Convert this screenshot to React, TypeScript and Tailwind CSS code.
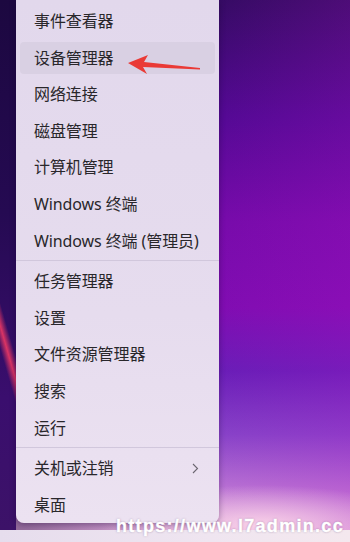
import React from 'react';

type Item = { label: string; active?: boolean; submenu?: boolean };

const groups: Item[][] = [
    [
        { label: '事件查看器' },
        { label: '设备管理器', active: true },
        { label: '网络连接' },
        { label: '磁盘管理' },
        { label: '计算机管理' },
        { label: 'Windows 终端' },
        { label: 'Windows 终端 (管理员)' },
    ],
    [
        { label: '任务管理器' },
        { label: '设置' },
        { label: '文件资源管理器' },
        { label: '搜索' },
        { label: '运行' },
    ],
    [
        { label: '关机或注销', submenu: true },
        { label: '桌面' },
    ],
];

const MenuRow: React.FC<{ item: Item }> = ({ item }) => (
    <div className="h-[36.6px] px-[4px] py-[2.3px]">
        <div
            className={`h-full rounded-[4px] pl-[14px] pr-[16px] flex items-center justify-between ${item.active ? 'bg-[#d9d0e3]' : ''}`}
        >
            <span className="text-[16px] leading-none whitespace-nowrap tracking-[-0.1px] text-[#29272b]">{item.label}</span>
            {item.submenu && (
                <svg width="8" height="11" viewBox="0 0 8 11" fill="none">
                    <path d="M2 1l4.5 4.5L2 10" stroke="#6b6670" strokeWidth="1.1" />
                </svg>
            )}
        </div>
    </div>
);

const App: React.FC = () => {
    return (
        <div className="relative w-[350px] h-[542px] overflow-hidden flex flex-col font-['Noto_Sans','Noto_Sans_CJK_SC',sans-serif]">
            <div className="flex-1 flex pl-[16px] [background:linear-gradient(74deg,rgba(236,52,96,0)_31%,rgba(236,56,100,0.9)_35%,rgba(236,52,96,0)_39%)_0_0/16px_100%_no-repeat,linear-gradient(180deg,#1c0840_0%,#250a52_40%,#3a0e6e_75%,#3c1268_100%)_0_0/16px_100%_no-repeat,radial-gradient(ellipse_160px_40px_at_260px_525px,rgba(255,220,235,0.85),rgba(255,220,235,0)),linear-gradient(90deg,rgba(16,0,40,0.4)_0%,rgba(16,0,40,0)_45%,rgba(180,20,200,0.25)_100%),linear-gradient(180deg,#2b0a5c_0%,#4c0890_22%,#720aa8_42%,#7c0cb0_58%,#641eb6_70%,#8446c8_82%,#b878d4_92%,#dca6da_100%)]">
                <div className="w-[203px] h-[523px] rounded-b-[8px] bg-[linear-gradient(180deg,#e2d8ec_0%,#e6dcee_60%,#ece2f1_100%)] shadow-[0_2px_6px_rgba(20,0,40,0.35)] pt-[2.7px]">
                    {groups.map((group, gi) => (
                        <div key={gi}>
                            {gi > 0 && (
                                <div className="h-[4px] flex items-center">
                                    <div className="h-px w-full bg-[#d1c7dc]" />
                                </div>
                            )}
                            {group.map((item) => (
                                <MenuRow key={item.label} item={item} />
                            ))}
                        </div>
                    ))}
                </div>
            </div>
            <div className="h-[12px] bg-[linear-gradient(90deg,#e6dded,#efe5f0_60%,#f4e8ee)]" />

            {/* red annotation arrow */}
            <svg className="absolute left-[126px] top-[52px]" width="80" height="24" viewBox="0 0 80 24">
                <path d="M2 11 L22 3 L18 10 L74 16 L74 17.5 L17 15 L21 22 Z" fill="#ea3a36" />
            </svg>

            {/* watermark */}
            <div className="absolute left-[116px] top-[517px] text-[18px] leading-none font-bold text-white font-['Liberation_Sans',sans-serif] tracking-[1.3px] [-webkit-text-stroke:0.4px_white] [text-shadow:0_0_2px_rgba(60,20,80,0.5)]">
                https://www.l7admin.cc
            </div>
        </div>
    );
};

export default App;
